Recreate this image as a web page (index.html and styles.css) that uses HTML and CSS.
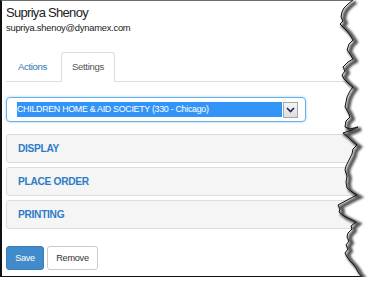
FILE: index.html
```html
<!DOCTYPE html>
<html>
<head>
    <title>User Settings</title>
    <link rel="stylesheet" href="styles.css">
</head>
<body>
    <div class="shot">
        <div class="user">
            <div class="user-name">Supriya Shenoy</div>
            <div class="user-mail">supriya.shenoy@dynamex.com</div>
        </div>

        <ul class="tabs">
            <li class="tab">Actions</li>
            <li class="tab active">Settings</li>
        </ul>

        <div class="tab-body">
            <div class="picker">
                <div class="picker-value">CHILDREN HOME &amp; AID SOCIETY (330 - Chicago)</div>
                <span class="picker-btn">
                    <svg width="9" height="6" viewBox="0 0 9 6">
                        <path d="M1 1 L4.5 4.5 L8 1" fill="none" stroke="#1b2a4a" stroke-width="1.6"/>
                    </svg>
                </span>
            </div>

            <div class="panel">DISPLAY</div>
            <div class="panel">PLACE ORDER</div>
            <div class="panel">PRINTING</div>

            <div class="actions">
                <button class="btn btn-primary">Save</button>
                <button class="btn">Remove</button>
            </div>
        </div>
    </div>

    <!-- torn right edge of the screenshot -->
    <svg class="tear" width="44" height="288" viewBox="330 0 44 288">
        <defs>
            <filter id="soft" x="-50%" y="-10%" width="200%" height="120%">
                <feGaussianBlur stdDeviation="1.3"/>
            </filter>
        </defs>
        <polygon fill="#fff" points="353,0 348,4 344,8 342,12 341,17 343,21 340,24 344,28 347,31 350,35 353,40 349,44 347,50 350,54 353,59 348,62 343,67 345,71 342,75 344,79 348,83 353,87 350,91 347,97 346,102 345,107 348,112 350,117 346,121 345,127 350,129 358,127 352,130 343,133 348,137 352,141 357,145 353,149 352,154 350,158 348,162 346,166 345,170 347,176 346,182 347,188 352,192 357,195 349,199 338,205 340,209 339,212 344,216 350,219 356,222 351,226 352,229 348,233 347,237 349,241 346,245 348,249 345,253 347,257 350,261 353,264 356,268 358,272 362,277 366,288 374,288 374,0"/>
        <polyline class="tear-shadow" filter="url(#soft)" transform="translate(3,2)" points="353,0 348,4 344,8 342,12 341,17 343,21 340,24 344,28 347,31 350,35 353,40 349,44 347,50 350,54 353,59 348,62 343,67 345,71 342,75 344,79 348,83 353,87 350,91 347,97 346,102 345,107 348,112 350,117 346,121 345,127 350,129 358,127 352,130 343,133 348,137 352,141 357,145 353,149 352,154 350,158 348,162 346,166 345,170 347,176 346,182 347,188 352,192 357,195 349,199 338,205 340,209 339,212 344,216 350,219 356,222 351,226 352,229 348,233 347,237 349,241 346,245 348,249 345,253 347,257 350,261 353,264 356,268 358,272 362,277"/>
        <polyline class="tear-line" points="353,0 348,4 344,8 342,12 341,17 343,21 340,24 344,28 347,31 350,35 353,40 349,44 347,50 350,54 353,59 348,62 343,67 345,71 342,75 344,79 348,83 353,87 350,91 347,97 346,102 345,107 348,112 350,117 346,121 345,127 350,129 358,127 352,130 343,133 348,137 352,141 357,145 353,149 352,154 350,158 348,162 346,166 345,170 347,176 346,182 347,188 352,192 357,195 349,199 338,205 340,209 339,212 344,216 350,219 356,222 351,226 352,229 348,233 347,237 349,241 346,245 348,249 345,253 347,257 350,261 353,264 356,268 358,272 362,277"/>
    </svg>
</body>
</html>
```

FILE: styles.css
```css
body {
    margin: 0;
    background-color: white;
    font-family: "Liberation Sans", Arial, sans-serif;
    color: #333;
    position: relative;
}

.shot {
    width: 366px;
    height: 275px;
    border-top: 1px solid #6f6f6f;
    border-left: 2px solid #111;
    border-bottom: 1px solid #111;
    box-shadow: 2px 4px 3px -1px rgba(0, 0, 0, 0.6);
    padding-left: 4px;
}

.user {
    padding-top: 4px;
}

.user-name {
    font-size: 13px;
    line-height: 15px;
    letter-spacing: -0.7px;
    color: #222;
}

.user-mail {
    margin-top: 2px;
    font-size: 9.4px;
    line-height: 12px;
    letter-spacing: -0.25px;
    color: #222;
}

.tabs {
    list-style: none;
    margin: 18px 0 0 0;
    padding: 0;
    display: flex;
    border-bottom: 1px solid #ddd;
}

.tab {
    height: 28px;
    line-height: 28px;
    padding: 0 11px;
    margin-right: 2px;
    margin-bottom: -1px;
    border: 1px solid transparent;
    border-radius: 3px 3px 0 0;
    font-size: 9.6px;
    letter-spacing: -0.35px;
    color: #337ab7;
}

.tab.active {
    padding: 0 10px;
    color: #555;
    background: white;
    border-color: #ddd;
    border-bottom-color: white;
}

.tab-body {
    padding-top: 15px;
}

.picker {
    width: 300px;
    height: 25px;
    box-sizing: border-box;
    border: 1px solid #66afe9;
    border-radius: 4px;
    box-shadow: 0 0 3px rgba(102, 175, 233, 0.6);
    display: flex;
    align-items: center;
    padding-left: 10px;
}

.picker-value {
    width: 265px;
    height: 15px;
    line-height: 15px;
    background: #3394f8;
    color: white;
    font-size: 8.9px;
    letter-spacing: -0.3px;
    white-space: nowrap;
    overflow: hidden;
}

.picker-btn {
    width: 13px;
    height: 14px;
    margin-left: 1px;
    border: 1px solid #a8a8a8;
    background: linear-gradient(#f6f6f6, #dcdcdc);
    display: flex;
    align-items: center;
    justify-content: center;
}

.panel {
    height: 29px;
    box-sizing: border-box;
    margin-top: 4px;
    padding-left: 11px;
    border: 1px solid #ddd;
    border-radius: 3px;
    background: #f5f5f5;
    font-size: 10.2px;
    letter-spacing: -0.3px;
    font-weight: bold;
    color: #2d7cc6;
    line-height: 27px;
}

.tab-body .picker + .panel {
    margin-top: 12px;
}

.actions {
    margin-top: 17px;
    display: flex;
    gap: 3px;
}

.btn {
    height: 24px;
    padding: 0;
    border: 1px solid #ccc;
    border-radius: 3px;
    background: white;
    font-family: "Liberation Sans", Arial, sans-serif;
    font-size: 9.2px;
    letter-spacing: -0.3px;
    color: #333;
    width: 51px;
}

.btn-primary {
    width: 38px;
    background: #428bca;
    border-color: #357ebd;
    color: white;
}

.tear {
    position: absolute;
    top: 0;
    left: 330px;
}

.tear-shadow {
    fill: none;
    stroke: #555;
    stroke-width: 4;
}

.tear-line {
    fill: none;
    stroke: #111;
    stroke-width: 1;
}
```
